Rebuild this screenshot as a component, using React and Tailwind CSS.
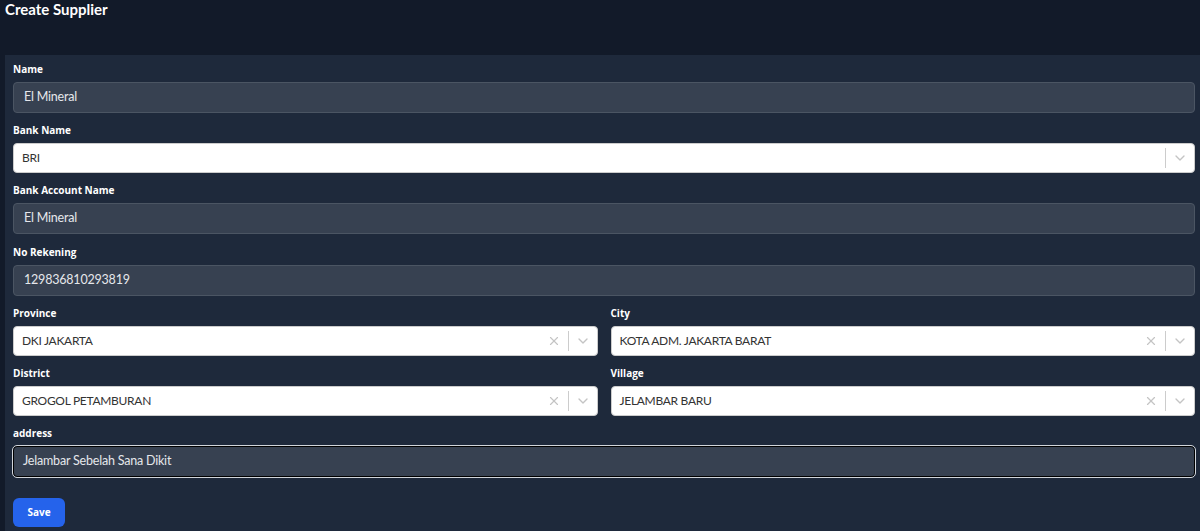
import { ChevronDown, X } from "lucide-react";

const Label = ({ children }) => (
  <div
    className="h-[14px] text-[10px] leading-[14px] font-bold text-white mb-[6px]"
    style={{ fontFamily: '"Open Sans", sans-serif' }}
  >
    {children}
  </div>
);

const TextInput = ({ value, focused }) => (
  <div
    className={
      focused
        ? "h-[31px] flex items-center px-[9px] rounded-[4px] bg-[#374151] border border-black outline outline-1 outline-[#d1d5db] text-[12.5px] tracking-[-0.2px] text-[#e5e7eb]"
        : "h-[31px] flex items-center px-[10px] rounded-[4px] bg-[#374151] border border-[#4b5563] text-[12.5px] tracking-[-0.2px] text-[#e5e7eb]"
    }
  >
    {value}
  </div>
);

const Select = ({ value, clearable }) => (
  <div className="h-[30px] flex items-center rounded-[4px] bg-white border border-[#cccccc] text-[12px] tracking-[-0.3px] text-[#333333]">
    <div className="flex-1 pl-[8px] truncate">{value}</div>
    {clearable && (
      <div className="w-[28px] flex justify-center text-[#c4c4c4]">
        <X size={14} strokeWidth={2} />
      </div>
    )}
    <div className="w-px h-[20px] bg-[#cccccc]" />
    <div className="w-[28px] flex justify-center text-[#c4c4c4]">
      <ChevronDown size={16} strokeWidth={2} />
    </div>
  </div>
);

const Field = ({ label, children, extra }) => (
  <div className={extra ? "mb-[11px]" : "mb-[10px]"}>
    <Label>{label}</Label>
    {children}
  </div>
);

export default function App() {
  return (
    <div
      className="min-h-screen bg-[#121a29] pl-[5px]"
      style={{ fontFamily: 'Lato, "Open Sans", sans-serif' }}
    >
      <div className="h-[55px]">
        <h1 className="text-[15px] leading-[18px] font-bold text-white">Create Supplier</h1>
      </div>
      <div className="bg-[#1e293b] pl-[8px] pr-[5px] pt-[7px] pb-[8px] min-h-[476px]">
        <Field label="Name">
          <TextInput value="El Mineral" />
        </Field>
        <Field label="Bank Name">
          <Select value="BRI" />
        </Field>
        <Field label="Bank Account Name" extra>
          <TextInput value="El Mineral" />
        </Field>
        <Field label="No Rekening">
          <TextInput value="129836810293819" />
        </Field>
        <div className="grid grid-cols-2 gap-x-[13px]">
          <Field label="Province">
            <Select value="DKI JAKARTA" clearable />
          </Field>
          <Field label="City">
            <Select value="KOTA ADM. JAKARTA BARAT" clearable />
          </Field>
          <Field label="District">
            <Select value="GROGOL PETAMBURAN" clearable />
          </Field>
          <Field label="Village">
            <Select value="JELAMBAR BARU" clearable />
          </Field>
        </div>
        <div className="mb-[21px]">
          <Label>address</Label>
          <TextInput value="Jelambar Sebelah Sana Dikit" focused />
        </div>
        <button
          className="w-[52px] h-[29px] rounded-[6px] bg-[#2563eb] text-white text-[10px] font-bold"
          style={{ fontFamily: '"Open Sans", sans-serif' }}
        >
          Save
        </button>
      </div>
    </div>
  );
}
